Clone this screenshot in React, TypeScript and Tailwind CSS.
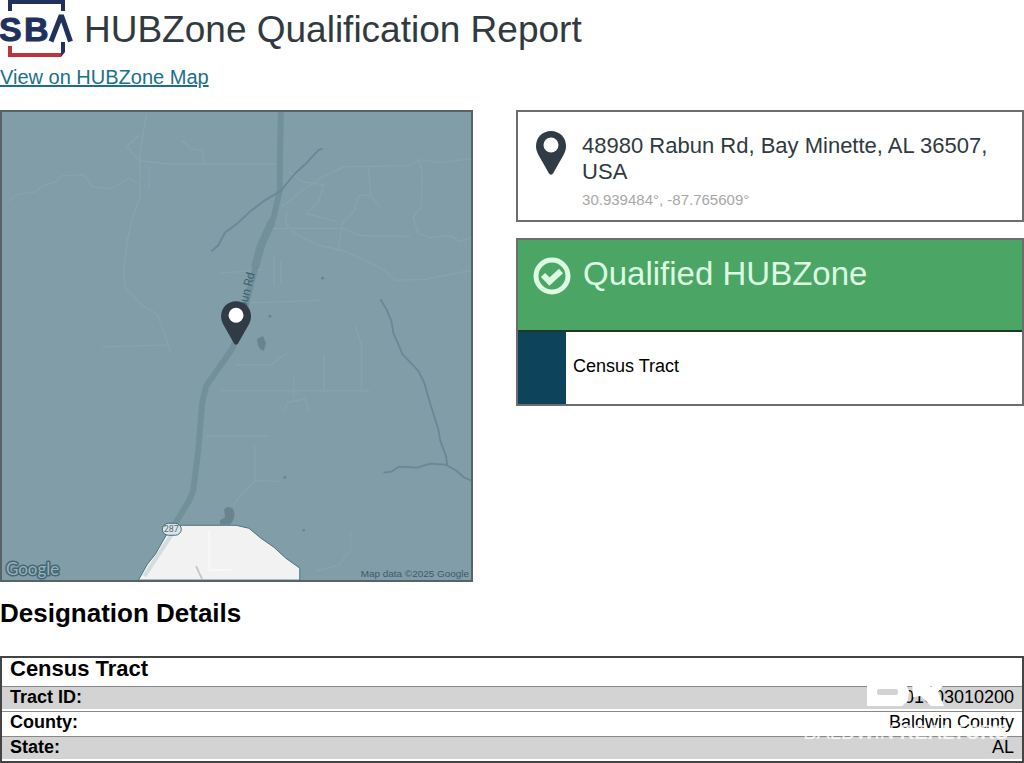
type Detail = {
  label: string
  value: string
}

const details: Detail[] = [
  { label: 'Tract ID:', value: '01003010200' },
  { label: 'County:', value: 'Baldwin County' },
  { label: 'State:', value: 'AL' }
]

// local roads, drawn faintly under the HUBZone tint
const minorRoads = [
  'M5 90 L15 83 L34 80 L42 74 L54 70 L60 64 L82 63 L91 75 L110 77 L128 66 L136 72',
  'M145 2 L142 20 L138 45 L139 85 L132 103 L126 128 L122 160 L124 176 L140 194 L156 203 L169 240',
  'M125 35 L138 23 M125 35 L139 49 L165 52 L275 52',
  'M180 28 L190 37 L202 39 L202 51 M148 54 L148 76',
  'M281 95 L300 80 L322 65 L344 55 L407 54 L420 48 L440 51 L471 47',
  'M288 60 L302 70 L323 73 L318 90 L306 102 L335 110',
  'M368 55 L370 83 L358 84 L354 99 L342 112 L337 140 M370 83 L380 96',
  'M418 49 L422 60 L421 95 L413 106 L418 122 L430 126 L450 124 L460 130 L471 126',
  'M272 117 L342 117 L360 124 L410 125',
  'M286 100 L285 112 L294 122 L315 133 L345 140 L380 156 L395 169 L425 168 L471 159',
  'M219 162 L262 158 M100 236 L165 234 M238 192 L320 189',
  'M273 145 L273 175 M280 150 L280 172 M355 215 L361 235',
  'M235 254 L270 254 L286 242 M323 243 L323 279 M361 230 L361 279 M220 280 L369 280',
  'M284 300 L286 292 L304 288 L308 300 M293 264 L293 287',
  'M205 325 L268 325 M254 335 L254 370 L278 371 M254 370 L232 394',
  'M350 420 L350 440 L338 455 L315 461'
]

function PinShape() {
  return (
    <>
      <path d="M15 0C6.500 0 0 6.500 0 15c0 3.500 1 6 2.500 9l10.500 18.500c1 1.500 3 1.500 4 0l10.500-18.500C29 21 30 18.500 30 15 30 6.500 23.500 0 15 0Z" fill="#303b46" />
      <circle cx="15" cy="14" r="7.500" fill="#fff" />
    </>
  )
}

function SbaLogo() {
  return (
    <svg viewBox="0 0 74 58" className="h-[58px] w-[74px] shrink-0" role="img" aria-label="SBA">
      <path d="M10 11 V0 M63 11 V0" fill="none" stroke="#21315e" strokeWidth="4" />
      <path d="M8 1.500 H65" fill="none" stroke="#21315e" strokeWidth="5" />
      <path d="M10 46 V55 H61" fill="none" stroke="#bd333c" strokeWidth="4" />
      <path d="M61 42 H65 V52 L61 57 V53 Z" fill="#21315e" />
      <g
        fill="#21315e"
        stroke="#21315e"
        strokeWidth="1"
        className="font-['Liberation_Sans',Arial,sans-serif] text-[34px] font-bold"
      >
        <text x="-1" y="41">
          S
        </text>
        <text x="24" y="41">
          B
        </text>
      </g>
      <path d="M51 41.500 L60.500 17 H62 L70.500 41.500" fill="none" stroke="#21315e" strokeWidth="5" />
    </svg>
  )
}

function TractMap() {
  return (
    <svg
      viewBox="0 0 471 470"
      className="block h-auto w-full bg-[#819da8]"
      role="img"
      aria-label="Map of Rabun Rd, Bay Minette"
    >
      <g fill="none" stroke="#87a3ad" strokeWidth="1.500" strokeLinejoin="round">
        {minorRoads.map((d) => (
          <path key={d} d={d} />
        ))}
      </g>

      <path
        d="M280 0 L279 50 L279 78 L273 105 L262 130 L252 165 L240 215 L231 238 L205 275 L201 292 L197 340 L192 380 L188 390 L173 415"
        fill="none"
        stroke="#72909a"
        strokeWidth="6"
        strokeLinejoin="round"
      />
      <path d="M271 110 L260 134 L254 156" fill="none" stroke="#72909a" strokeWidth="8" strokeLinejoin="round" />

      <g fill="none" stroke="#688894" strokeWidth="1.800" strokeLinejoin="round">
        <path d="M210 140 L217 134 L224 121 L235 113 L249 100 L262 90 L280 79 L294 62 L304 53 L318 38 L322 37" />
        <path d="M380 188 L386 198 L391 210 L393 222 L397 231 L402 243 L418 260 L424 272 L430 293 L438 318 L440 330 L446 346 L447 355" />
        <path d="M383 362 L391 361 L399 356 L417 357 L430 353 L445 354 L456 360 L464 367 L471 370" />
      </g>

      <g fill="#68858f">
        <path d="M256 228 l6 -3 3 7 -2 8 -4 -2 -2 -4 Z" />
        <path d="M223 399 q5 -5 9 0 q4 8 -3 15 h-10 v-4 l5 -3 Z" />
        <circle cx="322" cy="167" r="1.500" />
        <circle cx="269" cy="205" r="1.500" />
        <circle cx="284" cy="367" r="1.500" />
        <circle cx="303" cy="420" r="1.200" />
      </g>

      <path
        d="M137 470 L146 454 L154 444 L166 423 L178 415 L235 415 L248 418 L260 428 L273 437 L285 448 L299 458 L299 470 Z"
        fill="#f2f2f2"
        stroke="#4c7180"
      />
      <path d="M143 466 L170 425" fill="none" stroke="#d2dde0" strokeWidth="4" />
      <path d="M195 456 L198 463 L201 469" fill="none" stroke="#c5c9ca" strokeWidth="2" />
      <path d="M208 420 V460 H230" fill="none" stroke="#f8f8f8" strokeWidth="2" />

      <rect x="161" y="413" width="19" height="12" rx="6" fill="#dbe4e7" stroke="#456b79" />
      <text
        x="170"
        y="422"
        textAnchor="middle"
        fill="#526a75"
        className="font-['Roboto',sans-serif] text-[9px]"
      >
        287
      </text>

      <text
        transform="translate(245 198) rotate(-76)"
        fill="#3f6271"
        className="font-['Roboto',sans-serif] text-[12px]"
      >
        bun Rd
      </text>

      <g transform="translate(220 190)">
        <PinShape />
      </g>

      <text
        x="4"
        y="465"
        fill="#9bb1b9"
        stroke="#426675"
        strokeWidth="3"
        paintOrder="stroke"
        strokeLinejoin="round"
        className="font-['Lato',sans-serif] text-[17px]"
      >
        Google
      </text>
      <text
        x="469"
        y="467"
        textAnchor="end"
        fill="#3b5b68"
        className="font-['Liberation_Sans',Arial,sans-serif] text-[10px]"
      >
        Map data ©2025 Google
      </text>
    </svg>
  )
}

function Watermark() {
  return (
    <div className="pointer-events-none absolute right-4 bottom-[19px] flex flex-col items-center text-white">
      <svg viewBox="0 0 78 28" className="mb-3 h-7 w-[78px]" aria-hidden="true">
        <path
          d="M0 0 H37 L42 11 L41 21 L35 26 H0 Z M12 9 H29 Q31 9 31 11 V13 Q31 15 29 15 H12 Q10 15 10 13 V11 Q10 9 12 9 Z"
          fill="#fff"
          fillRule="evenodd"
        />
        <path d="M45 0 H59 L64 7 L71 0 H80 L71 12 L77 26 H64 L54 16 L46 17 Z" fill="#fff" />
      </svg>
      <p className="text-[20px] leading-6 whitespace-nowrap opacity-80">
        BALDWIN <strong>REALTORS</strong>
      </p>
    </div>
  )
}

export default function App() {
  return (
    <main className="bg-white font-['Liberation_Sans',Arial,sans-serif] text-black">
      <header>
        <div className="flex h-[58px] items-start gap-[10px]">
          <SbaLogo />
          <h1 className="text-[37px] leading-[60px] whitespace-nowrap text-[#303a40]">
            HUBZone Qualification Report
          </h1>
        </div>
        <a href="#map" className="mt-[7px] block w-fit text-[20px] leading-6 text-[#19708c] underline">
          View on HUBZone Map
        </a>
      </header>

      <div className="mt-[21px] flex items-start gap-[43px]">
        <section id="map" className="w-[46.200%] shrink-0 border-2 border-[#586367]">
          <TractMap />
        </section>

        <div className="flex-1">
          <section className="flex h-28 gap-4 border-2 border-[#6b6d6f] pt-[19px] pl-[18px]">
            <svg viewBox="0 0 30 44" className="h-11 w-[30px] shrink-0" aria-hidden="true">
              <PinShape />
            </svg>
            <div>
              <p className="pt-[2px] text-[22px] leading-[26px] text-[#303a40]">
                48980 Rabun Rd, Bay Minette, AL 36507, USA
              </p>
              <p className="mt-[5px] text-[15px] leading-5 text-[#a7a7a7]">30.939484°, -87.765609°</p>
            </div>
          </section>

          <section className="mt-4 border-2 border-[#6b6d6f]">
            <div className="flex h-[92px] items-start gap-3 border-b-2 border-[#20382a] bg-[#4ba564] pt-[15px] pl-[15px] text-[#dbfbe2]">
              <svg viewBox="0 0 38 38" className="mt-[2px] h-[38px] w-[38px] shrink-0" fill="none" aria-hidden="true">
                <circle cx="19" cy="19" r="16" stroke="currentColor" strokeWidth="5" />
                <path d="M10 18 L16.500 24.500 L28 14" stroke="currentColor" strokeWidth="6" />
              </svg>
              <h2 className="text-[33px] leading-[38px]">Qualified HUBZone</h2>
            </div>
            <div className="flex h-[72px]">
              <div className="w-12 bg-[#0e445b]" />
              <p className="pt-6 pl-[7px] text-[18px] leading-5">Census Tract</p>
            </div>
          </section>
        </div>
      </div>

      <h2 className="mt-4 text-[26px] leading-[30px] font-bold">Designation Details</h2>

      <div className="relative mt-7">
        <table className="w-full border-separate border-spacing-0 border-2 border-[#444] text-[18px] leading-5">
          <thead>
            <tr>
              <th colSpan={2} className="h-[28px] px-2 pb-[6px] text-left text-[22px] leading-[22px]">
                Census Tract
              </th>
            </tr>
          </thead>
          <tbody>
            {details.map(({ label, value }) => (
              <tr key={label} className="bg-white odd:bg-[#d3d3d3]">
                <th
                  scope="row"
                  className="h-[25px] border-t border-b-2 border-t-[#888] border-b-white px-2 pb-[2px] text-left"
                >
                  {label}
                </th>
                <td className="h-[25px] border-t border-b-2 border-t-[#888] border-b-white px-2 pb-[2px] text-right">
                  {value}
                </td>
              </tr>
            ))}
          </tbody>
        </table>
        <Watermark />
      </div>
    </main>
  )
}
